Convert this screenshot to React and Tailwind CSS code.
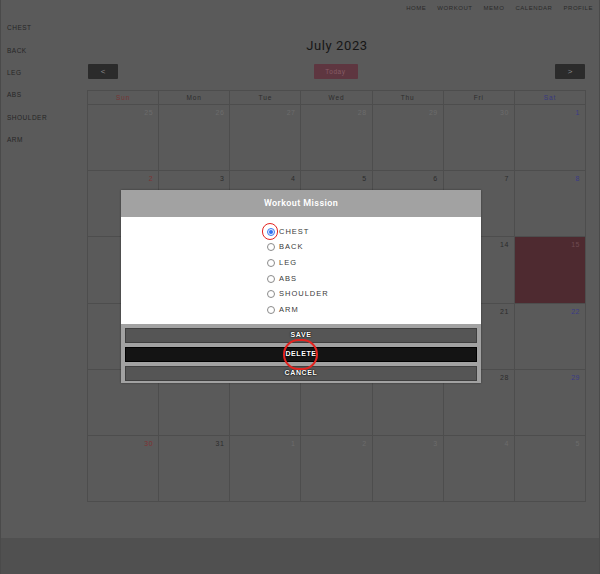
import React from 'react';

const cx = (...c) => c.filter(Boolean).join(' ');

const NAV = ['HOME', 'WORKOUT', 'MEMO', 'CALENDAR', 'PROFILE'];
const PARTS = ['CHEST', 'BACK', 'LEG', 'ABS', 'SHOULDER', 'ARM'];
const DAYS = ['Sun', 'Mon', 'Tue', 'Wed', 'Thu', 'Fri', 'Sat'];

// six weeks of July 2023, with the spill-over days from June / August
const WEEKS = [
  [25, 26, 27, 28, 29, 30, 1],
  [2, 3, 4, 5, 6, 7, 8],
  [9, 10, 11, 12, 13, 14, 15],
  [16, 17, 18, 19, 20, 21, 22],
  [23, 24, 25, 26, 27, 28, 29],
  [30, 31, 1, 2, 3, 4, 5],
];

// ── Day cell ──────────────────────────────────────────────────
function DayCell({ day, col, outside, today }) {
  const color = outside
    ? 'text-[#6c6c6c]'
    : today
      ? 'text-[#6e4a50]'
      : col === 0
        ? 'text-[#7e3232]'
        : col === 6
          ? 'text-[#3a3a86]'
          : 'text-[#2c2c2c]';
  return (
    <div className={cx('h-[66.2px] border-r border-b border-[#4d4d4d] flex justify-end pt-[3px] pr-[5px]', today && 'bg-[#4e2a30]')}>
      <span className={cx('text-[7px] leading-[10px] tracking-[0.5px]', color)}>{day}</span>
    </div>
  );
}

// ── Radio row ─────────────────────────────────────────────────
function Radio({ label, checked }) {
  return (
    <div className="h-[15.6px] flex items-center gap-[4px]">
      {checked ? (
        <span className="w-[8px] h-[8px] rounded-full border border-[#3d7bf0] bg-[#e8f0ff] flex items-center justify-center">
          <span className="w-[4px] h-[4px] rounded-full bg-[#2f6ff0]" />
        </span>
      ) : (
        <span className="w-[8px] h-[8px] rounded-full border border-[#8a8a8a] bg-white" />
      )}
      <span className="text-[7.5px] leading-[10px] tracking-[1px] text-[#3a3a3a]">{label}</span>
    </div>
  );
}

function ModalButton({ children, dark }) {
  return (
    <button className={cx(
      'h-[15px] w-full border flex items-center justify-center text-white text-[7px] font-bold tracking-[0.6px] [text-shadow:0_0_2px_#000,0_0_1px_#000]',
      dark ? 'bg-[#141414] border-[#000]' : 'bg-[#555555] border-[#3f3f3f]'
    )}>
      {children}
    </button>
  );
}

export default function App() {
  return (
    <div className="relative w-[600px] h-[574px] overflow-hidden bg-[#5a5a5a] border-l border-r border-[#4a4a4a] flex flex-col font-['Liberation_Sans',Arial,sans-serif]">
      {/* top nav */}
      <nav className="h-[17px] flex justify-end items-center gap-[11px] pr-[6px] pb-[1px]">
        {NAV.map((n) => (
          <span key={n} className="text-[6px] tracking-[0.55px] text-[#2a2a2a]">{n}</span>
        ))}
      </nav>

      <div className="flex flex-1">
        {/* sidebar */}
        <aside className="w-[86px] pl-[6px] flex flex-col">
          {PARTS.map((p) => (
            <div key={p} className="h-[22.4px] flex items-center text-[6.5px] tracking-[0.5px] text-[#262626]">{p}</div>
          ))}
        </aside>

        {/* calendar */}
        <section className="w-[499px] flex flex-col">
          <h1 className="mt-[21px] h-[16px] text-center text-[13px] leading-[16px] tracking-[0.6px] text-[#161616] font-['Roboto',sans-serif] pl-[1px]">July 2023</h1>

          <div className="mt-[10px] h-[15px] flex items-center justify-between px-[1px]">
            <button className="w-[30px] h-[15px] bg-[#2b2b2b] rounded-[1px] text-[#8a8a8a] text-[8px] leading-none">&lt;</button>
            <button className="w-[44px] h-[15px] bg-[#5e3640] rounded-[1px] text-[#865c66] text-[6.5px] tracking-[0.6px] ml-[-2px]">Today</button>
            <button className="w-[30px] h-[15px] bg-[#2b2b2b] rounded-[1px] text-[#8a8a8a] text-[8px] leading-none">&gt;</button>
          </div>

          <div className="mt-[11px] grid grid-cols-7 border-l border-t border-[#4d4d4d]">
            {DAYS.map((d, i) => (
              <div
                key={d}
                className={cx(
                  'h-[14px] border-r border-b border-[#4d4d4d] flex items-center justify-center text-[6.5px] tracking-[0.9px]',
                  i === 0 ? 'text-[#763434]' : i === 6 ? 'text-[#383880]' : 'text-[#2c2c2c]'
                )}>
                {d}
              </div>
            ))}
            {WEEKS.map((w, r) =>
              w.map((d, c) => (
                <DayCell
                  key={`${r}-${c}`}
                  day={d}
                  col={c}
                  outside={(r === 0 && d > 7) || (r === 5 && d < 7)}
                  today={r === 2 && d === 15}
                />
              ))
            )}
          </div>
        </section>
      </div>

      <footer className="h-[36px] bg-[#505050]" />

      {/* modal */}
      <div className="absolute left-[120px] top-[190px] w-[360px] bg-[#a2a2a2] shadow-[0_0_2px_rgba(0,0,0,0.4)]">
        <div className="h-[27px] flex items-center justify-center text-white text-[9px] font-semibold tracking-[0.4px] font-['Roboto',sans-serif]">
          Workout Mission
        </div>
        <div className="bg-white h-[107px] pt-[7px] pl-[146px]">
          {PARTS.map((p, i) => (
            <Radio key={p} label={p} checked={i === 0} />
          ))}
        </div>
        <div className="px-[4px] pt-[4px] pb-[2px] flex flex-col gap-[4px]">
          <ModalButton>SAVE</ModalButton>
          <ModalButton dark>DELETE</ModalButton>
          <ModalButton>CANCEL</ModalButton>
        </div>
      </div>

      {/* annotation circles */}
      <span className="absolute left-[261px] top-[223px] w-[16px] h-[17px] rounded-full border-[1.5px] border-[#e3231f]" />
      <span className="absolute left-[282px] top-[339px] w-[35px] h-[31px] rounded-full border-2 border-[#e3231f]" />
    </div>
  );
}
